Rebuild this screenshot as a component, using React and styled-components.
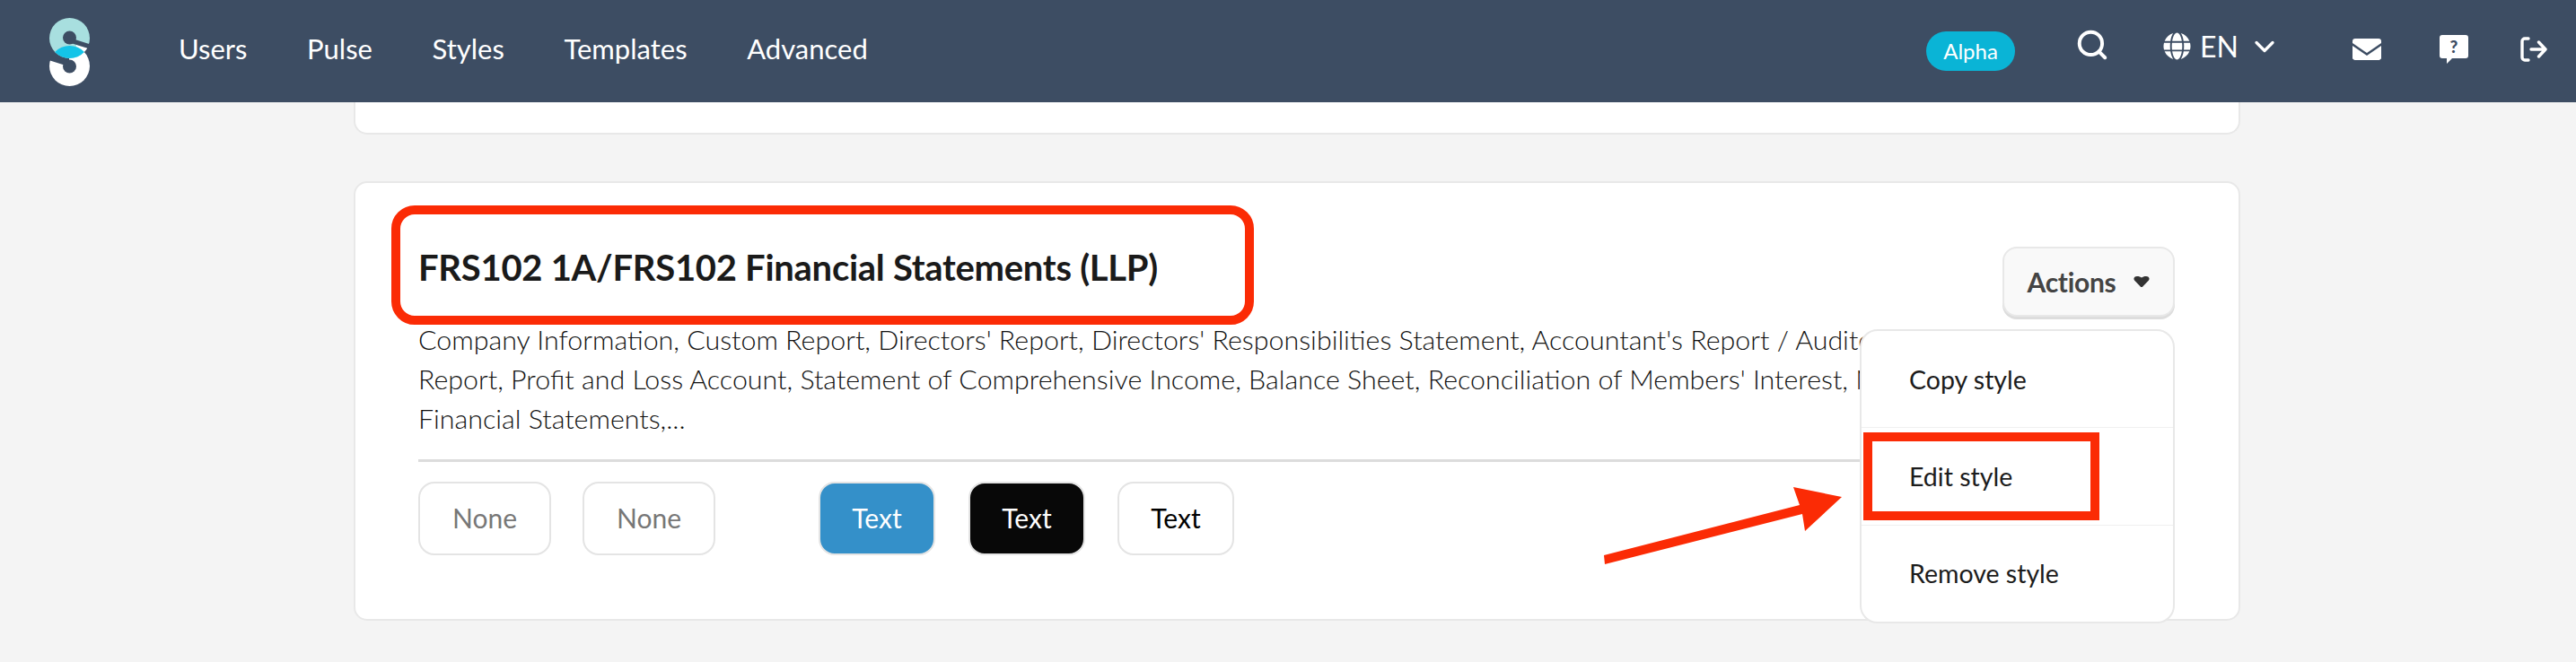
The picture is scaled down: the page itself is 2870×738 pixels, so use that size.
import React from "react";
import styled, { createGlobalStyle } from "styled-components";
import { FaGlobe } from "react-icons/fa";
import { Search, ChevronDown } from "lucide-react";

const GlobalStyle = createGlobalStyle`
  html, body {
    margin: 0;
    padding: 0;
    height: 100%;
    background: #f4f4f4;
    font-family: "Lato", "Liberation Sans", sans-serif;
    overflow: hidden;
  }
`;

const TopBar = styled.header`
  height: 114px;
  background: #3d4d63;
  display: flex;
  align-items: center;
  color: #fff;
  position: relative;
  z-index: 2;
`;

const LogoWrap = styled.div`
  margin-left: 55px;
  width: 45px;
  height: 76px;
  margin-top: 1px;
  display: flex;
`;

const NavList = styled.nav`
  margin-left: 99px;
  margin-bottom: 6px;
  display: flex;
  gap: 66.6px;
  font-size: 31px;
`;

const NavLink = styled.a`
  color: #fff;
`;

const RightSide = styled.div`
  margin-left: auto;
  display: flex;
  align-items: center;
`;

const AlphaPill = styled.span`
  width: 99px;
  height: 44px;
  margin-top: -1px;
  border-radius: 22px;
  background: #0ab4d6;
  color: #fff;
  font-size: 24px;
  display: flex;
  align-items: center;
  justify-content: center;
  margin-right: 67px;
`;

const SearchIcon = styled(Search)`
  width: 38px;
  height: 38px;
  margin-right: 60px;
  margin-top: -14px;
  stroke-width: 2.5;
`;

const LangBox = styled.div`
  display: flex;
  align-items: center;
  font-size: 32px;
  margin-top: -12px;
  margin-right: 80px;
`;

const GlobeIcon = styled(FaGlobe)`
  width: 31px;
  height: 31px;
  margin-right: 10px;
`;

const LangChevron = styled(ChevronDown)`
  width: 36px;
  height: 36px;
  margin-left: 11px;
  margin-top: 2px;
  stroke-width: 2.2;
`;

const IconSlot = styled.svg`
  display: block;
  margin-top: -5px;
  margin-right: ${(p) => p.$gap}px;
`;

const Page = styled.main`
  width: 2102px;
  margin-left: 394px;
`;

const StubCard = styled.div`
  height: 34px;
  background: #fff;
  border: 2px solid #e8e8e8;
  border-top: none;
  border-radius: 0 0 15px 15px;
  margin-bottom: 52px;
`;

const Card = styled.section`
  position: relative;
  box-sizing: border-box;
  height: 490px;
  background: #fff;
  border: 2px solid #e8e8e8;
  border-radius: 15px;
  padding: 71px 71px 70px 70px;
`;

const CardHead = styled.div`
  display: flex;
  justify-content: space-between;
  align-items: flex-start;
  height: 80px;
`;

const Title = styled.h2`
  margin: -1px 0 0;
  font-size: 40px;
  line-height: 48px;
  font-weight: 700;
  letter-spacing: -0.28px;
  color: #1a1a1a;
`;

const ActionsButton = styled.button`
  box-sizing: border-box;
  width: 192px;
  height: 78px;
  border: 2px solid #e8e8e8;
  border-radius: 16px;
  background: #f9f9f9;
  box-shadow: 0 3px 0 #dddddd;
  color: #444;
  font-family: inherit;
  font-size: 30px;
  font-weight: 700;
  letter-spacing: -0.3px;
  display: flex;
  align-items: center;
  justify-content: center;
  gap: 20px;
`;

const Description = styled.p`
  margin: 1px 0 0;
  font-size: 30.4px;
  line-height: 44px;
  font-weight: 300;
  color: #111;
`;

const Divider = styled.hr`
  margin: 24px 0 22px;
  border: none;
  height: 3px;
  background: #dcdcdc;
`;

const ButtonRow = styled.div`
  display: flex;
  align-items: center;
`;

const SwatchButton = styled.div`
  box-sizing: border-box;
  width: ${(p) => p.$w}px;
  height: 82px;
  margin-right: ${(p) => p.$gap}px;
  padding-bottom: 2px;
  border: 2px solid #e4e4e4;
  border-radius: 18px;
  background: ${(p) => p.$bg};
  color: ${(p) => p.$fg};
  font-size: 30px;
  display: flex;
  align-items: center;
  justify-content: center;
`;

const Menu = styled.div`
  position: absolute;
  z-index: 3;
  left: 1676px;
  top: 163px;
  box-sizing: border-box;
  width: 351px;
  height: 328px;
  background: #fff;
  border: 2px solid #e8e8e8;
  border-radius: 20px;
  display: flex;
  flex-direction: column;
`;

const MenuItem = styled.div`
  position: relative;
  flex: 1;
  display: flex;
  align-items: center;
  padding-left: 53px;
  font-size: 28.5px;
  color: #1c1c1c;
  & + & {
    border-top: 1px solid #f0f0f0;
  }
`;

const EditFrame = styled.span`
  position: absolute;
  left: 2px;
  top: 5px;
  box-sizing: border-box;
  width: 263px;
  height: 98px;
  border: 10px solid #fb2b05;
`;

const TitleFrame = styled.div`
  position: absolute;
  left: 40px;
  top: 25px;
  box-sizing: border-box;
  width: 961px;
  height: 133px;
  border: 10px solid #fb2b05;
  border-radius: 26px;
  pointer-events: none;
`;

const ArrowMark = styled.svg`
  position: absolute;
  z-index: 4;
  left: 1391px;
  top: 339px;
`;

const Logo = () => (
  <svg viewBox="0 0 45 76" width="45" height="76">
    <circle cx="22.5" cy="53.5" r="22.5" fill="#fff" />
    <path d="M-1 30H22V52L-1 44.500Z" fill="#3d4d63" />
    <circle cx="22.5" cy="22.5" r="22.5" fill="#a8dfdf" />
    <path d="M30 30L42.400 33.500A22.500 22.500 0 0 1 38.800 38A22.500 22.500 0 0 0 30 32.300Z" fill="#fff" />
    <path d="M6.2 38A22.5 22.5 0 0 1 38.8 38A22.5 22.5 0 0 1 6.2 38Z" fill="#14c4e8" />
    <circle cx="22.5" cy="22" r="7.5" fill="#3d4d63" />
    <circle cx="22.5" cy="54" r="7.5" fill="#3d4d63" />
    <path d="M23 25L47 32.500M22 51.500L-2 44" stroke="#3d4d63" strokeWidth="5" />
  </svg>
);

const MailIcon = () => (
  <IconSlot viewBox="0 0 32 24" width="32" height="24" $gap={65}>
    <path d="M3 0H29A3 3 0 0 1 32 3V5L16 16L0 5V3A3 3 0 0 1 3 0Z" fill="#fff" />
    <path d="M0 8L16 19L32 8V20A3 3 0 0 1 29 24H3A3 3 0 0 1 0 20Z" fill="#fff" />
  </IconSlot>
);

const HelpIcon = () => (
  <IconSlot viewBox="0 0 32 32" width="32" height="32" $gap={58}>
    <path d="M3 0H29A3 3 0 0 1 32 3V23A3 3 0 0 1 29 26H14L8 32V26H3A3 3 0 0 1 0 23V3A3 3 0 0 1 3 0Z" fill="#fff" />
    <text x="16" y="20" textAnchor="middle" fontSize="19" fontWeight="900" fill="#3d4d63" fontFamily="Lato, sans-serif">?</text>
  </IconSlot>
);

const LogoutIcon = () => (
  <IconSlot viewBox="0 0 30 28" width="30" height="28" $gap={32} fill="none" stroke="#fff" strokeWidth="3.4" strokeLinecap="round" strokeLinejoin="round">
    <path d="M9 2H5A3 3 0 0 0 2 5V23A3 3 0 0 0 5 26H9" />
    <path d="M12 14H28M20.500 6L28 14L20.500 22" />
  </IconSlot>
);

const swatches = [
  { label: "None", w: 148, gap: 35, bg: "#fff", fg: "#777" },
  { label: "None", w: 148, gap: 115, bg: "#fff", fg: "#777" },
  { label: "Text", w: 130, gap: 37, bg: "#3490c9", fg: "#fff" },
  { label: "Text", w: 130, gap: 36, bg: "#080808", fg: "#fff" },
  { label: "Text", w: 130, gap: 0, bg: "#fff", fg: "#000" },
];

const App = () => (
  <>
    <GlobalStyle />
    <TopBar>
      <LogoWrap>
        <Logo />
      </LogoWrap>
      <NavList>
        {["Users", "Pulse", "Styles", "Templates", "Advanced"].map((item) => (
          <NavLink key={item}>{item}</NavLink>
        ))}
      </NavList>
      <RightSide>
        <AlphaPill>Alpha</AlphaPill>
        <SearchIcon />
        <LangBox>
          <GlobeIcon />
          EN
          <LangChevron />
        </LangBox>
        <MailIcon />
        <HelpIcon />
        <LogoutIcon />
      </RightSide>
    </TopBar>
    <Page>
      <StubCard />
      <Card>
        <TitleFrame />
        <CardHead>
          <Title>FRS102 1A/FRS102 Financial Statements (LLP)</Title>
          <ActionsButton>
            Actions
            <svg viewBox="0 0 18 12" width="18" height="12">
              <path d="M4 0C6 0 8 .6 9 1.6C10 .6 12 0 14 0C17 0 18.500 2.500 17 4.500L10.500 11.300A2 2 0 0 1 7.500 11.300L1 4.500C-.5 2.500 1 0 4 0Z" fill="#333" />
            </svg>
          </ActionsButton>
        </CardHead>
        <Description>
          Company Information, Custom Report, Directors' Report, Directors' Responsibilities Statement, Accountant's Report / Auditor's
          <br />
          Report, Profit and Loss Account, Statement of Comprehensive Income, Balance Sheet, Reconciliation of Members' Interest, Notes to the
          <br />
          Financial Statements,...
        </Description>
        <Divider />
        <ButtonRow>
          {swatches.map((s, i) => (
            <SwatchButton key={i} $w={s.w} $gap={s.gap} $bg={s.bg} $fg={s.fg}>
              {s.label}
            </SwatchButton>
          ))}
        </ButtonRow>
        <Menu>
          <MenuItem>Copy style</MenuItem>
          <MenuItem>
            Edit style
            <EditFrame />
          </MenuItem>
          <MenuItem>Remove style</MenuItem>
        </Menu>
        <ArrowMark viewBox="0 0 268 90" width="268" height="90">
          <path d="M0 76L218 20L211 0L265 11L224 49L221 30L1 86Z" fill="#fb2b05" />
        </ArrowMark>
      </Card>
    </Page>
  </>
);

export default App;
